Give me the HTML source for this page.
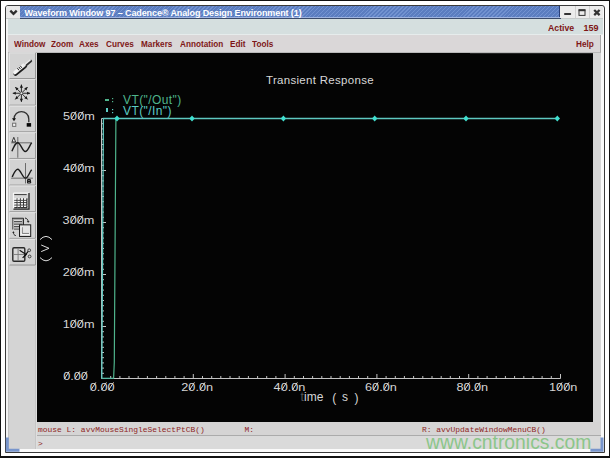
<!DOCTYPE html>
<html><head><meta charset="utf-8">
<style>
*{margin:0;padding:0;box-sizing:border-box}
html,body{width:610px;height:458px;overflow:hidden;background:#fff;font-family:"Liberation Sans",sans-serif}
.a{position:absolute}
.m{position:absolute;color:#7e1616;font-weight:bold;font-size:9px;white-space:nowrap;line-height:10px;transform:scaleX(0.91);transform-origin:0 0}
.c{position:absolute;font-family:"Liberation Mono",monospace;font-size:7.95px;line-height:9px;color:#8e2424;white-space:pre;font-weight:normal}
</style></head><body>
<div class="a" style="left:0;top:0;width:610px;height:458px;border:1px solid #111;border-bottom-width:2px"></div>
<div class="a" style="left:5px;top:5px;width:600px;height:448px;border:1px solid #3a3a3a;border-radius:3px 3px 0 0;background:#fafafa"></div>
<!-- chevron button -->
<div class="a" style="left:6px;top:6px;width:14px;height:12px;background:#e9e9e9;border-radius:2px 0 0 0"></div>
<svg class="a" style="left:6px;top:6px" width="14" height="12"><path d="M4.3 4.6 L7.5 7.8 L10.7 4.6" stroke="#2e2e2e" stroke-width="2.3" fill="none"/></svg>
<!-- title -->
<div class="a" style="left:20px;top:6px;width:540px;height:12px;background:#5b7dc0;background-image:repeating-linear-gradient(135deg,rgba(150,180,235,0) 0px,rgba(150,180,235,0) 1.8px,rgba(150,180,235,.38) 1.8px,rgba(150,180,235,.38) 2.8px);border-right:1px solid #2a3f78"></div>
<div class="a" style="left:20px;top:16.6px;width:540px;height:1px;background:#9fb4e0"></div>
<div class="a" style="left:24.5px;top:8px;color:#fff;font-weight:bold;font-size:9px;white-space:nowrap;line-height:10px;letter-spacing:-0.1px">Waveform Window 97 – Cadence® Analog Design Environment (1)</div>
<!-- wm buttons -->
<div class="a" style="left:560px;top:6px;width:43px;height:12px;background:#ececec;border-radius:0 3px 0 0"></div>
<div class="a" style="left:574.5px;top:6px;width:1px;height:12px;background:#d0d0d0"></div>
<div class="a" style="left:589px;top:6px;width:1px;height:12px;background:#d0d0d0"></div>
<svg class="a" style="left:560px;top:6px" width="43" height="12">
<rect x="4" y="7" width="7.2" height="1.9" rx="0.9" fill="#333"/>
<rect x="19" y="3.8" width="6" height="5.6" fill="none" stroke="#333" stroke-width="1"/><rect x="18.6" y="3.4" width="6.8" height="1.8" fill="#333"/>
<path d="M34.2 4 L39.6 9.2 M39.6 4 L34.2 9.2" stroke="#333" stroke-width="2.3"/>
</svg>
<div class="a" style="left:20px;top:18px;width:541px;height:1px;background:#3a4a6a"></div><div class="a" style="left:6px;top:18px;width:14px;height:1px;background:#c8cccc"></div><div class="a" style="left:561px;top:18px;width:42px;height:1px;background:#c8cccc"></div>
<div class="a" style="left:6px;top:19px;width:2px;height:433px;background:#f4f4f4"></div>
<!-- status -->
<div class="a" style="left:8px;top:19px;width:595px;height:15.5px;background:#d5dfdf"></div>
<div class="a" style="left:8px;top:34.3px;width:595px;height:1px;background:#e6ecec"></div>
<div class="m" style="left:548px;top:22.5px;transform:scaleX(0.97)">Active</div>
<div class="m" style="left:583.5px;top:22.5px;transform:scaleX(1)">159</div>
<!-- menu -->
<div class="a" style="left:8px;top:35px;width:593px;height:18px;background:#dad7d8;border-right:1px solid #a9a9a9;border-bottom:1px solid #b9b9b9"></div>
<div class="m" style="left:14px;top:39px">Window</div>
<div class="m" style="left:51px;top:39px">Zoom</div>
<div class="m" style="left:79px;top:39px">Axes</div>
<div class="m" style="left:105.5px;top:39px">Curves</div>
<div class="m" style="left:141px;top:39px">Markers</div>
<div class="m" style="left:180px;top:39px">Annotation</div>
<div class="m" style="left:229.5px;top:39px">Edit</div>
<div class="m" style="left:251.5px;top:39px">Tools</div>
<div class="m" style="left:576px;top:39px">Help</div>
<!-- left column -->
<div class="a" style="left:8px;top:53px;width:28px;height:396px;background:#d4d4d4"></div><div class="a" style="left:8px;top:53px;width:1px;height:396px;background:#c4c4c4"></div>
<div class="a" style="left:35px;top:53px;width:1px;height:396px;background:#c6c6c6"></div><div class="a" style="left:36px;top:53px;width:1px;height:396px;background:#dedede"></div>
<!-- plot -->
<div class="a" style="left:37px;top:53px;width:556px;height:369px;background:#040404"></div>
<div class="a" style="left:593px;top:53px;width:8px;height:369px;background:#d6d6d6"></div><div class="a" style="left:470px;top:53px;width:123px;height:1px;background:#262626"></div>
<!-- message rows -->
<div class="a" style="left:37px;top:422px;width:564px;height:13px;background:#d5d4d4"></div>
<div class="a" style="left:37px;top:435px;width:564px;height:1px;background:#ababab"></div>
<div class="a" style="left:37px;top:436px;width:564px;height:13px;background:#dadada"></div>
<div class="c" style="left:38px;top:425px">mouse L: avvMouseSingleSelectPtCB()</div>
<div class="c" style="left:244.5px;top:425px">M:</div>
<div class="c" style="left:422px;top:425.3px">R: avvUpdateWindowMenuCB()</div>
<div class="c" style="left:38px;top:438.5px">&gt;</div>
<!-- corners -->
<svg class="a" style="left:0;top:0" width="610" height="458">
<path d="M7.3 437.5V450.3H19.5" stroke="#7895cc" stroke-width="3" fill="none"/>
<path d="M590.4 450.3H602V437.5" stroke="#7895cc" stroke-width="3" fill="none"/>
</svg>
<svg class="a" style="left:0;top:0" width="610" height="458">
<g transform="translate(9 52.40)"><rect x="0" y="0" width="27" height="26.64" fill="#d3d3d3"/><path d="M0.5 26.14V0.5H26.5" stroke="#e4e4e4" fill="none"/><path d="M26.5 0.5V26.14H0.5" stroke="#969696" fill="none"/></g><g transform="translate(9 79.04)"><rect x="0" y="0" width="27" height="26.64" fill="#d3d3d3"/><path d="M0.5 26.14V0.5H26.5" stroke="#e4e4e4" fill="none"/><path d="M26.5 0.5V26.14H0.5" stroke="#969696" fill="none"/></g><g transform="translate(9 105.68)"><rect x="0" y="0" width="27" height="26.64" fill="#d3d3d3"/><path d="M0.5 26.14V0.5H26.5" stroke="#e4e4e4" fill="none"/><path d="M26.5 0.5V26.14H0.5" stroke="#969696" fill="none"/></g><g transform="translate(9 132.32)"><rect x="0" y="0" width="27" height="26.64" fill="#d3d3d3"/><path d="M0.5 26.14V0.5H26.5" stroke="#e4e4e4" fill="none"/><path d="M26.5 0.5V26.14H0.5" stroke="#969696" fill="none"/></g><g transform="translate(9 158.96)"><rect x="0" y="0" width="27" height="26.64" fill="#d3d3d3"/><path d="M0.5 26.14V0.5H26.5" stroke="#e4e4e4" fill="none"/><path d="M26.5 0.5V26.14H0.5" stroke="#969696" fill="none"/></g><g transform="translate(9 185.60)"><rect x="0" y="0" width="27" height="26.64" fill="#d3d3d3"/><path d="M0.5 26.14V0.5H26.5" stroke="#e4e4e4" fill="none"/><path d="M26.5 0.5V26.14H0.5" stroke="#969696" fill="none"/></g><g transform="translate(9 212.24)"><rect x="0" y="0" width="27" height="26.64" fill="#d3d3d3"/><path d="M0.5 26.14V0.5H26.5" stroke="#e4e4e4" fill="none"/><path d="M26.5 0.5V26.14H0.5" stroke="#969696" fill="none"/></g><g transform="translate(9 238.88)"><rect x="0" y="0" width="27" height="26.64" fill="#d3d3d3"/><path d="M0.5 26.14V0.5H26.5" stroke="#e4e4e4" fill="none"/><path d="M26.5 0.5V26.14H0.5" stroke="#969696" fill="none"/></g><g transform="translate(9 52.4)">
<path d="M6.6 21.2 L15.8 13.6" stroke="#1a1a1a" stroke-width="4.6" stroke-linecap="round"/>
<path d="M15 14.3 L21.8 8.6" stroke="#2e2e2e" stroke-width="2.6" stroke-linecap="round"/>
<path d="M5.8 20.2 L15 12.6" stroke="#f4f4f4" stroke-width="3.4" stroke-linecap="round"/>
<path d="M14.6 13 L21.2 7.6" stroke="#e8e8e8" stroke-width="1.6" stroke-linecap="round"/>
<path d="M8.4 15.8l1.6 2.1M9.9 14.6l1.6 2.1M11.3 13.4l1.5 2" stroke="#222" stroke-width="1"/>
</g><g transform="translate(9 79.04)">
<path d="M12.4 14.2L21.00 14.20M12.4 14.2L18.48 20.28M12.4 14.2L12.40 22.80M12.4 14.2L6.32 20.28M12.4 14.2L3.80 14.20M12.4 14.2L6.32 8.12M12.4 14.2L12.40 5.60M12.4 14.2L18.48 8.12" stroke="#2a2a2a" stroke-width="1"/>
<path d="M21.20 14.20L18.00 15.80L18.00 12.60ZM18.62 20.42L15.23 19.29L17.49 17.03ZM12.40 23.00L10.80 19.80L14.00 19.80ZM6.18 20.42L7.31 17.03L9.57 19.29ZM3.60 14.20L6.80 12.60L6.80 15.80ZM6.18 7.98L9.57 9.11L7.31 11.37ZM12.40 5.40L14.00 8.60L10.80 8.60ZM18.62 7.98L17.49 11.37L15.23 9.11Z" fill="#1a1a1a"/>
<circle cx="12.4" cy="14.2" r="1" fill="#f0f0f0"/>
</g><g transform="translate(9 105.68)">
<path d="M5 13.5 C5 3.5 19.8 3.5 19.8 13.5 V16.5" stroke="#303030" stroke-width="1.3" fill="none"/>
<path d="M3 12.5 H7 L5 15.5Z" fill="#101010"/>
<rect x="3.6" y="17.5" width="3.2" height="3.2" fill="#f4f4f4" stroke="#707070" stroke-width="1"/>
<rect x="17.7" y="17.4" width="4.4" height="3.6" fill="#080808"/>
</g><g transform="translate(9 132.32)">
<path d="M8.8 4.7V25.4M2.1 10.5H22.7" stroke="#6a6a6a" stroke-width="1"/>
<path d="M2.9 18.9 C5.5 13 6.5 10.5 8.8 10.5 C11.5 10.5 13.5 19.2 16.2 19.2 C19 19.2 20.5 13 22.7 10.5" stroke="#1c1c1c" stroke-width="1.4" fill="none"/>
<path d="M3 9.6 L4.8 5 L6.6 9.6Z" fill="#f6f6f6" stroke="#222" stroke-width="0.9"/>
</g><g transform="translate(9 158.96)">
<path d="M16.5 4.1V24.5M2.1 19.2H23.9" stroke="#6a6a6a" stroke-width="1"/>
<path d="M3.2 18 C5.5 13 6.5 10.3 8.8 10.3 C11.5 10.3 13.5 19.2 16.5 19.2 C19 19.2 20.5 13 22.7 10.9" stroke="#1c1c1c" stroke-width="1.4" fill="none"/>
<path d="M18.6 20.5V24.2M18.6 20.7H20.4Q21.5 20.7 21.5 21.6Q21.5 22.4 20.4 22.4H18.6M20.4 22.4Q21.8 22.4 21.8 23.3Q21.8 24.1 20.5 24.1H18.6" stroke="#151515" stroke-width="1.1" fill="none"/>
</g><g transform="translate(9 185.6)">
<rect x="4.4" y="7.4" width="15.6" height="16.2" fill="#d6d6d6"/>
<path d="M4.4 23.6V7.4H20" stroke="#fafafa" stroke-width="1" fill="none"/>
<path d="M20 7.4V23.6H4.4" stroke="#222" stroke-width="1.3" fill="none"/>
<path d="M5.3 9H17.7" stroke="#3a3a3a" stroke-width="1"/>
<rect x="5.3" y="12.7" width="2.4" height="1.7" fill="#fafafa"/><path d="M5.3 14.799999999999999h2.9v-2.1" stroke="#111" stroke-width="1" fill="none"/><rect x="8.5" y="12.7" width="2.4" height="1.7" fill="#fafafa"/><path d="M8.5 14.799999999999999h2.9v-2.1" stroke="#111" stroke-width="1" fill="none"/><rect x="11.8" y="12.7" width="2.4" height="1.7" fill="#fafafa"/><path d="M11.8 14.799999999999999h2.9v-2.1" stroke="#111" stroke-width="1" fill="none"/><rect x="15.0" y="12.7" width="2.4" height="1.7" fill="#fafafa"/><path d="M15.0 14.799999999999999h2.9v-2.1" stroke="#111" stroke-width="1" fill="none"/><rect x="5.3" y="15.1" width="2.4" height="1.7" fill="#fafafa"/><path d="M5.3 17.2h2.9v-2.1" stroke="#111" stroke-width="1" fill="none"/><rect x="8.5" y="15.1" width="2.4" height="1.7" fill="#fafafa"/><path d="M8.5 17.2h2.9v-2.1" stroke="#111" stroke-width="1" fill="none"/><rect x="11.8" y="15.1" width="2.4" height="1.7" fill="#fafafa"/><path d="M11.8 17.2h2.9v-2.1" stroke="#111" stroke-width="1" fill="none"/><rect x="15.0" y="15.1" width="2.4" height="1.7" fill="#fafafa"/><path d="M15.0 17.2h2.9v-2.1" stroke="#111" stroke-width="1" fill="none"/><rect x="5.3" y="17.5" width="2.4" height="1.7" fill="#fafafa"/><path d="M5.3 19.6h2.9v-2.1" stroke="#111" stroke-width="1" fill="none"/><rect x="8.5" y="17.5" width="2.4" height="1.7" fill="#fafafa"/><path d="M8.5 19.6h2.9v-2.1" stroke="#111" stroke-width="1" fill="none"/><rect x="11.8" y="17.5" width="2.4" height="1.7" fill="#fafafa"/><path d="M11.8 19.6h2.9v-2.1" stroke="#111" stroke-width="1" fill="none"/><rect x="15.0" y="17.5" width="2.4" height="1.7" fill="#fafafa"/><path d="M15.0 19.6h2.9v-2.1" stroke="#111" stroke-width="1" fill="none"/><rect x="5.3" y="20.0" width="2.4" height="1.7" fill="#fafafa"/><path d="M5.3 22.1h2.9v-2.1" stroke="#111" stroke-width="1" fill="none"/><rect x="8.5" y="20.0" width="2.4" height="1.7" fill="#fafafa"/><path d="M8.5 22.1h2.9v-2.1" stroke="#111" stroke-width="1" fill="none"/><rect x="11.8" y="20.0" width="2.4" height="1.7" fill="#fafafa"/><path d="M11.8 22.1h2.9v-2.1" stroke="#111" stroke-width="1" fill="none"/><rect x="15.0" y="20.0" width="2.4" height="1.7" fill="#fafafa"/><path d="M15.0 22.1h2.9v-2.1" stroke="#111" stroke-width="1" fill="none"/>
</g><g transform="translate(9 212.24)">
<rect x="3" y="6" width="11.5" height="11.2" fill="#a8a8a8"/><path d="M3.5 6V17.2" stroke="#6a6a6a" stroke-width="1"/>
<path d="M3 6H14.5V17.2" stroke="#2a2a2a" stroke-width="1" fill="none"/>
<path d="M5 8.5h8M5 11h8M5 13.5h8M5 16h5" stroke="#f0f0f0" stroke-width="0.9"/>
<path d="M5 9.3h8M5 11.8h8M5 14.3h8M5 16.8h5" stroke="#333" stroke-width="0.8"/>
<rect x="10.5" y="12.6" width="11.2" height="11.6" fill="#e4e4e4" stroke="#1a1a1a" stroke-width="1"/>
<path d="M12.5 14.5V22H20.5" stroke="#fcfcfc" stroke-width="1" fill="none"/>
<path d="M13.3 15V21.2H20" stroke="#555" stroke-width="0.7" fill="none"/>
<path d="M16 5.8 C18 6 19 7.5 19.2 9.5" stroke="#222" stroke-width="1" fill="none"/>
<path d="M17.8 9 L20.6 9 L19.2 10.6Z" fill="#111"/>
<path d="M6.8 23.4 C5.2 23 4.5 22 4.4 20" stroke="#222" stroke-width="1" fill="none"/>
<path d="M3.2 20.5 L5.6 20.5 L4.4 19Z" fill="#111"/>
</g><g transform="translate(9 238.88)">
<rect x="3.8" y="8.8" width="12" height="13.5" rx="1.2" fill="#d8d8d8" stroke="#2a2a2a" stroke-width="1.4"/>
<path d="M9.1 9.5V21.5M4.5 15.6H15.2" stroke="#777" stroke-width="0.9"/>
<path d="M10.6 11.3 L17.2 15.6 L13.6 19" stroke="#111" stroke-width="1.2" fill="none"/>
<path d="M15 17.8 L19.2 12.6" stroke="#111" stroke-width="1.2"/>
<circle cx="20.2" cy="11.4" r="1.4" fill="none" stroke="#333" stroke-width="0.9"/>
<circle cx="20.6" cy="17.6" r="1.4" fill="none" stroke="#333" stroke-width="0.9"/>
</g>
</svg>
<svg class="a" style="left:0;top:0" width="610" height="458" viewBox="0 0 610 458">
<text x="266" y="84" font-family="Liberation Sans" font-size="11.5" letter-spacing="0.3" fill="#d8d8d8">Transient Response</text>
<path d="M101.5 118.5V378.5H560.5M110.7 378.5v-2.5M119.9 378.5v-2.5M129.0 378.5v-2.5M138.2 378.5v-2.5M147.4 378.5v-2.5M156.6 378.5v-2.5M165.8 378.5v-2.5M174.9 378.5v-2.5M184.1 378.5v-2.5M193.3 378.5v-4.5M202.5 378.5v-2.5M211.7 378.5v-2.5M220.8 378.5v-2.5M230.0 378.5v-2.5M239.2 378.5v-2.5M248.4 378.5v-2.5M257.6 378.5v-2.5M266.7 378.5v-2.5M275.9 378.5v-2.5M285.1 378.5v-4.5M294.3 378.5v-2.5M303.5 378.5v-2.5M312.6 378.5v-2.5M321.8 378.5v-2.5M331.0 378.5v-2.5M340.2 378.5v-2.5M349.4 378.5v-2.5M358.5 378.5v-2.5M367.7 378.5v-2.5M376.9 378.5v-4.5M386.1 378.5v-2.5M395.3 378.5v-2.5M404.4 378.5v-2.5M413.6 378.5v-2.5M422.8 378.5v-2.5M432.0 378.5v-2.5M441.2 378.5v-2.5M450.3 378.5v-2.5M459.5 378.5v-2.5M468.7 378.5v-4.5M477.9 378.5v-2.5M487.1 378.5v-2.5M496.2 378.5v-2.5M505.4 378.5v-2.5M514.6 378.5v-2.5M523.8 378.5v-2.5M533.0 378.5v-2.5M542.1 378.5v-2.5M551.3 378.5v-2.5M560.5 378.5v-4.5M101.5 373.3h2.5M101.5 368.1h2.5M101.5 362.9h2.5M101.5 357.7h2.5M101.5 352.5h2.5M101.5 347.3h2.5M101.5 342.1h2.5M101.5 336.9h2.5M101.5 331.7h2.5M101.5 326.5h4.5M101.5 321.3h2.5M101.5 316.1h2.5M101.5 310.9h2.5M101.5 305.7h2.5M101.5 300.5h2.5M101.5 295.3h2.5M101.5 290.1h2.5M101.5 284.9h2.5M101.5 279.7h2.5M101.5 274.5h4.5M101.5 269.3h2.5M101.5 264.1h2.5M101.5 258.9h2.5M101.5 253.7h2.5M101.5 248.5h2.5M101.5 243.3h2.5M101.5 238.1h2.5M101.5 232.9h2.5M101.5 227.7h2.5M101.5 222.5h4.5M101.5 217.3h2.5M101.5 212.1h2.5M101.5 206.9h2.5M101.5 201.7h2.5M101.5 196.5h2.5M101.5 191.3h2.5M101.5 186.1h2.5M101.5 180.9h2.5M101.5 175.7h2.5M101.5 170.5h4.5M101.5 165.3h2.5M101.5 160.1h2.5M101.5 154.9h2.5M101.5 149.7h2.5M101.5 144.5h2.5M101.5 139.3h2.5M101.5 134.1h2.5M101.5 128.9h2.5M101.5 123.7h2.5M101.5 118.5h4.5" stroke="#c4c4c4" stroke-width="1" fill="none"/>
<g font-family="Liberation Sans" font-size="12" fill="#d6d6d6"><text transform="translate(63.00 120.00) scale(1.06 0.9)">500m</text><text transform="translate(63.00 172.00) scale(1.06 0.9)">400m</text><text transform="translate(62.60 224.00) scale(1.06 0.9)">300m</text><text transform="translate(62.70 276.00) scale(1.06 0.9)">200m</text><text transform="translate(62.70 328.00) scale(1.06 0.9)">100m</text><text transform="translate(63.20 380.00) scale(1.06 0.9)">0.00</text><text transform="translate(89.80 391.00) scale(1.06 0.9)">0.00</text><text transform="translate(181.30 391.00) scale(1.06 0.9)">20.0n</text><text transform="translate(273.60 391.00) scale(1.06 0.9)">40.0n</text><text transform="translate(365.00 391.00) scale(1.06 0.9)">60.0n</text><text transform="translate(456.40 391.00) scale(1.06 0.9)">80.0n</text><text transform="translate(549.00 391.00) scale(1.06 0.9)">100n</text></g><path d="M71.11 119.20L76.11 111.40M78.18 119.20L83.18 111.40M71.11 171.20L76.11 163.40M78.18 171.20L83.18 163.40M70.71 223.20L75.71 215.40M77.78 223.20L82.78 215.40M70.81 275.20L75.81 267.40M77.88 275.20L82.88 267.40M70.81 327.20L75.81 319.40M77.88 327.20L82.88 319.40M64.24 379.20L69.24 371.40M74.84 379.20L79.84 371.40M81.92 379.20L86.92 371.40M90.84 390.20L95.84 382.40M101.44 390.20L106.44 382.40M108.52 390.20L113.52 382.40M189.41 390.20L194.41 382.40M200.02 390.20L205.02 382.40M281.71 390.20L286.71 382.40M292.32 390.20L297.32 382.40M373.11 390.20L378.11 382.40M383.72 390.20L388.72 382.40M464.51 390.20L469.51 382.40M475.12 390.20L480.12 382.40M557.11 390.20L562.11 382.40M564.18 390.20L569.18 382.40" stroke="#d8d8d8" stroke-width="1"/><g font-family="Liberation Sans" font-size="12" fill="#d6d6d6"><text x="300.5" y="401.3" fill="#555555">t</text><text x="304" y="401.3">ime</text><text x="332.2" y="401.5">(</text><text x="342" y="401.3">s</text><text x="354.5" y="401.5">)</text></g>
<path d="M40 239.6Q46 233.2 52 239.6M40 257.6Q46 264 52 257.6M41.2 245L49 248.3L41.2 251.6" stroke="#dcdcdc" stroke-width="1" fill="none"/>
<g font-family="Liberation Sans" font-size="12" letter-spacing="0.4">
<text x="123" y="103.5" fill="#4fb48c">VT("/Out")</text>
<text x="123" y="115" fill="#5cccc4">VT("/In")</text>
</g>
<rect x="105" y="99" width="4" height="2" fill="#4fb48c"/>
<rect x="112" y="98" width="1.2" height="1.2" fill="#4fb48c"/><rect x="112" y="101" width="1.2" height="1.2" fill="#4fb48c"/>
<rect x="106" y="108" width="2" height="4" fill="#5cccc4"/>
<rect x="112" y="109" width="1.2" height="1.2" fill="#5cccc4"/><rect x="112" y="112" width="1.2" height="1.2" fill="#5cccc4"/>
<path d="M101.8 378.5L103.4 118.5H557.5" stroke="#5ec8c0" stroke-width="1.3" fill="none"/><path d="M102 378.3H113.8" stroke="#4fb8a0" stroke-width="1.2" fill="none"/>
<path d="M113.6 378.5L114.3 362L115.9 118.5" stroke="#4fb48c" stroke-width="1.2" fill="none"/>
<g fill="#40e0d0">
<path d="M117 115.5l2.7 3-2.7 3-2.7-3z"/>
<path d="M192 115.5l2.7 3-2.7 3-2.7-3z"/>
<path d="M283.4 115.5l2.7 3-2.7 3-2.7-3z"/>
<path d="M374.7 115.5l2.7 3-2.7 3-2.7-3z"/>
<path d="M466 115.5l2.7 3-2.7 3-2.7-3z"/>
<path d="M557.3 115.5l2.7 3-2.7 3-2.7-3z"/>
</g>
</svg>
<div class="a" style="left:425.5px;top:430.3px;color:#8cc68a;font-size:21px;line-height:24px;white-space:nowrap;transform:scaleX(0.92);transform-origin:0 0">www.cntronics.com</div>
</body></html>
